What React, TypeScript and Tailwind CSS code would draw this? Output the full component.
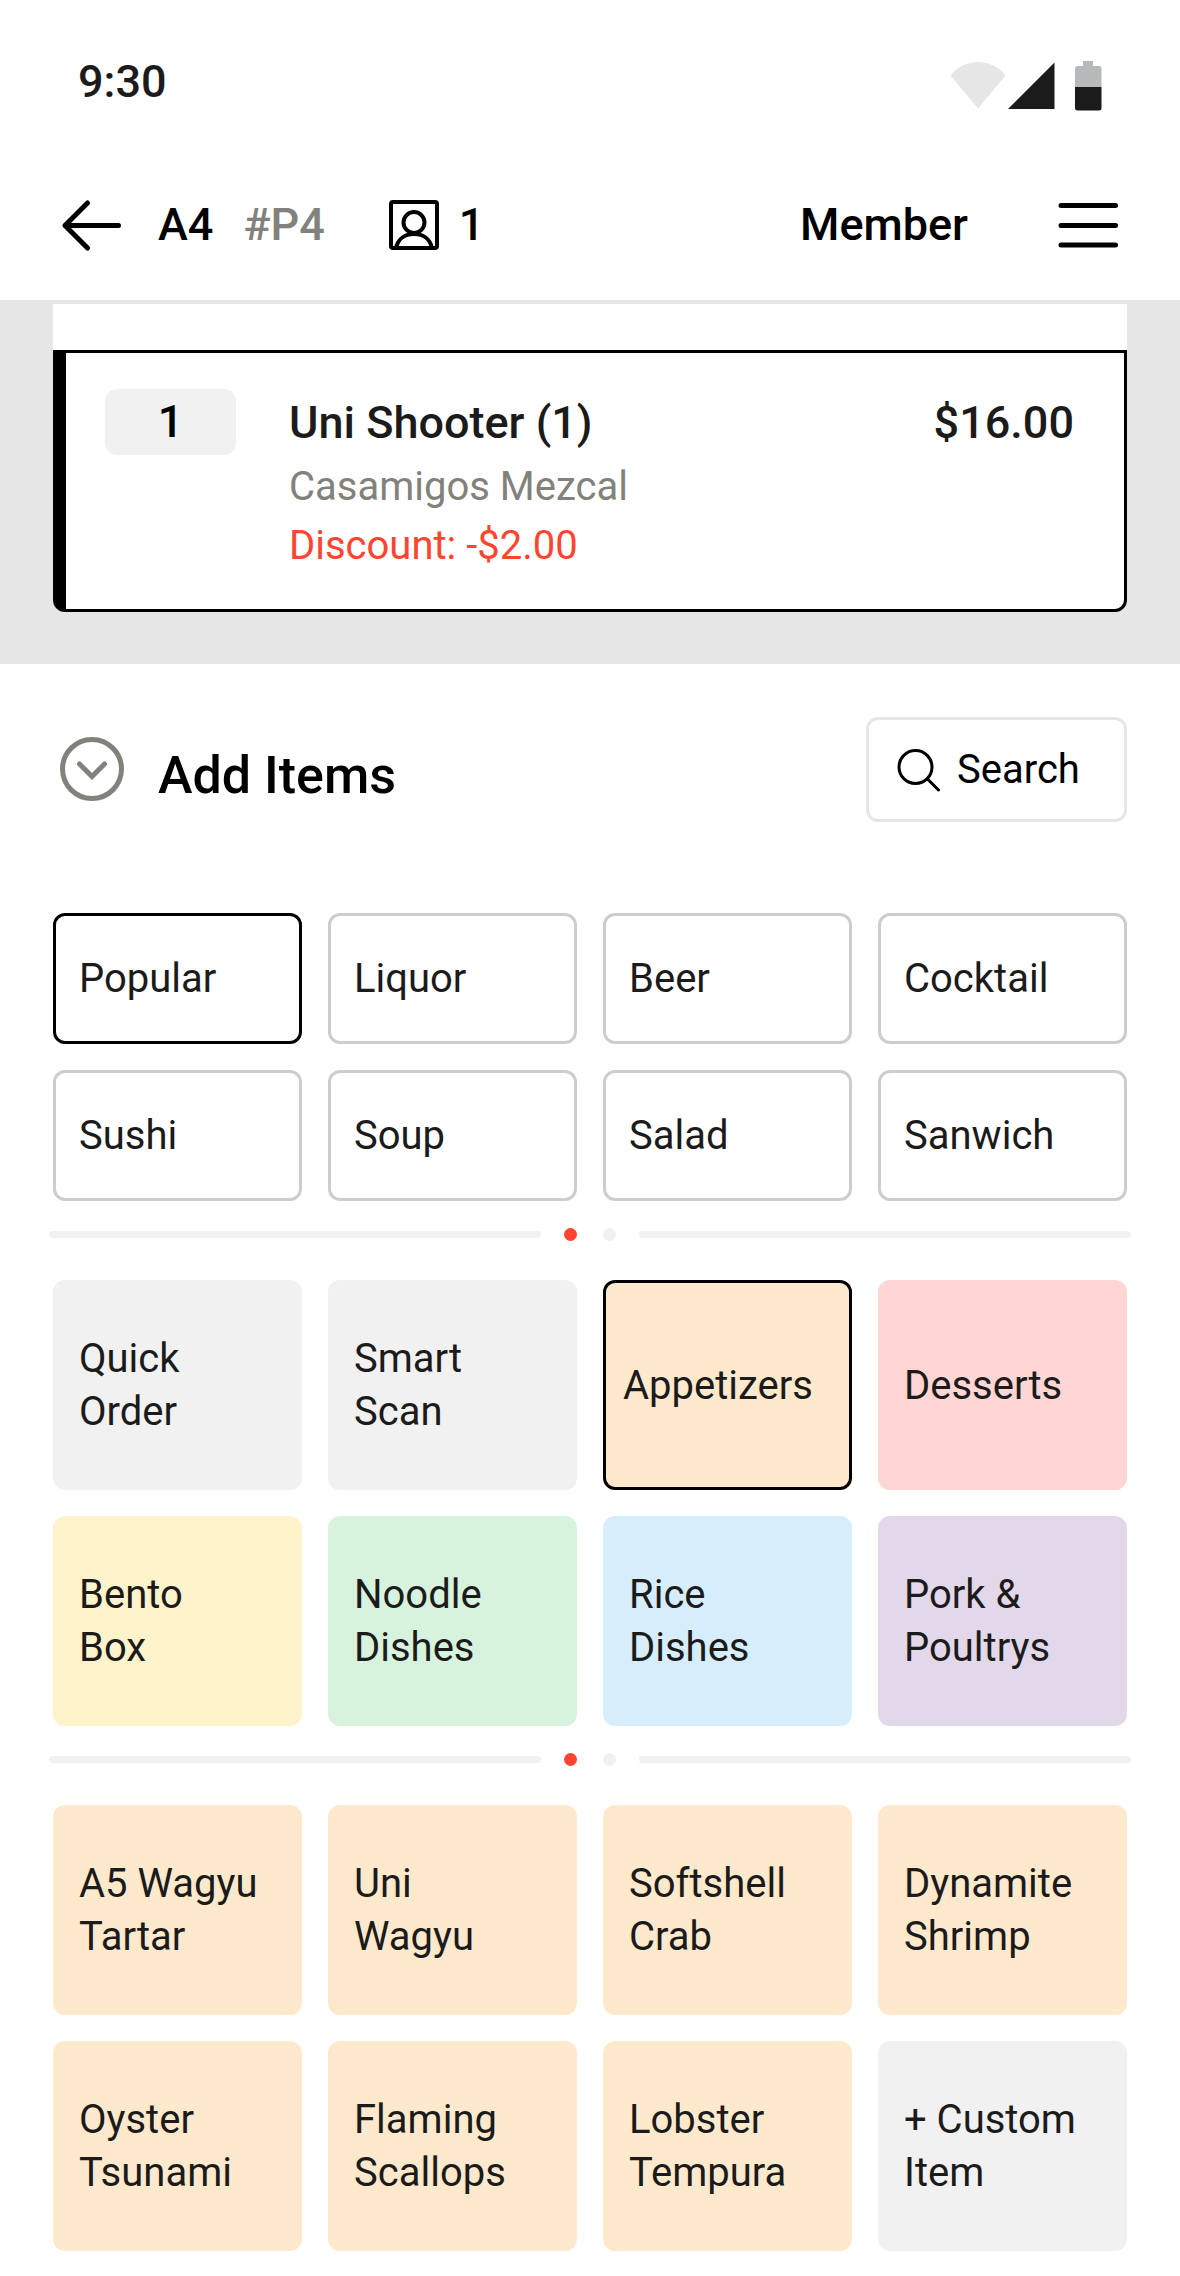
import React, { ReactNode, useState } from "react";

interface TileData {
	label: string;
	color: string;
}

const categories = [
	"Popular",
	"Liquor",
	"Beer",
	"Cocktail",
	"Sushi",
	"Soup",
	"Salad",
	"Sanwich",
];

const groups: TileData[] = [
	{ label: "Quick\nOrder", color: "bg-[#f1f1f1]" },
	{ label: "Smart\nScan", color: "bg-[#f1f1f1]" },
	{ label: "Appetizers", color: "bg-[#ffe9cc]" },
	{ label: "Desserts", color: "bg-[#ffd6d3]" },
	{ label: "Bento\nBox", color: "bg-[#fff3cc]" },
	{ label: "Noodle\nDishes", color: "bg-[#d7f3de]" },
	{ label: "Rice\nDishes", color: "bg-[#d6eefb]" },
	{ label: "Pork &\nPoultrys", color: "bg-[#e3d8e9]" },
];

const items: TileData[] = [
	{ label: "A5 Wagyu\nTartar", color: "bg-[#ffe9cc]" },
	{ label: "Uni\nWagyu", color: "bg-[#ffe9cc]" },
	{ label: "Softshell\nCrab", color: "bg-[#ffe9cc]" },
	{ label: "Dynamite\nShrimp", color: "bg-[#ffe9cc]" },
	{ label: "Oyster\nTsunami", color: "bg-[#ffe9cc]" },
	{ label: "Flaming\nScallops", color: "bg-[#ffe9cc]" },
	{ label: "Lobster\nTempura", color: "bg-[#ffe9cc]" },
	{ label: "+ Custom\nItem", color: "bg-[#f1f1f1]" },
];

// Icons
const StatusIcons = () => (
	<svg className="w-[154px] h-14" viewBox="0 0 154 56" aria-hidden="true">
		<path d="M30 52.5L2.5 19.5A34.8 34.8 0 0 1 57.5 19.5Z" fill="#e6e6e6" />
		<path d="M60 53L106.5 6.5V53Z" fill="#1c1b1b" />
		<path
			d="M135 5h10v5h6a2.5 2.5 0 0 1 2.5 2.5V31H127V12.5a2.5 2.5 0 0 1 2.5-2.5h5.5z"
			fill="#b8b9ba"
		/>
		<path
			d="M127 31h26.5v21a2.5 2.5 0 0 1-2.5 2.5h-21.5a2.5 2.5 0 0 1-2.5-2.5z"
			fill="#1c1b1b"
		/>
	</svg>
);

const BackIcon = () => (
	<svg
		className="w-[79px] h-[79px]"
		viewBox="0 0 79 79"
		fill="none"
		stroke="currentColor"
		strokeWidth="5"
		strokeLinecap="round"
		strokeLinejoin="round">
		<path d="M65.5 39.5H12M34.5 17L12 39.5L34.5 62" />
	</svg>
);

const MenuIcon = () => (
	<svg
		className="w-[79px] h-[79px]"
		viewBox="0 0 79 79"
		fill="none"
		stroke="currentColor"
		strokeWidth="5"
		strokeLinecap="round">
		<path d="M13 19.5H67.5M13 39.5H67.5M13 59H67.5" />
	</svg>
);

const GuestIcon = () => (
	<svg
		className="w-[50px] h-[50px]"
		viewBox="0 0 50 50"
		fill="none"
		stroke="currentColor"
		strokeWidth="4">
		<rect x="2" y="2" width="46" height="46" rx="2" />
		<circle cx="25" cy="22.5" r="10.5" />
		<path d="M7 48C9 39 16 34 25 34S41 39 43 48" />
	</svg>
);

const CollapseIcon = () => (
	<svg
		className="w-[79px] h-[79px]"
		viewBox="0 0 79 79"
		fill="none"
		stroke="currentColor"
		strokeWidth="5"
		strokeLinecap="round">
		<circle cx="39" cy="39" r="29.5" />
		<path d="M26.5 34L39 46.5L51.5 34" />
	</svg>
);

const SearchIcon = () => (
	<svg
		className="w-[44px] h-[44px]"
		viewBox="0 0 44 44"
		fill="none"
		stroke="currentColor"
		strokeWidth="3"
		strokeLinecap="round">
		<circle cx="18.5" cy="19" r="16.5" />
		<path d="M30.5 31L41.5 42" />
	</svg>
);

// Page indicator between two grids
const Pager = () => (
	<div className="flex items-center mt-[27px] mb-[39px] -mx-1">
		<div className="flex-1 h-[7px] rounded-full bg-[#f1f1f1]"></div>
		<div className="flex gap-[26px] mx-[23px]">
			<span className="w-[13px] h-[13px] rounded-full bg-[#ff4530]"></span>
			<span className="w-[13px] h-[13px] rounded-full bg-[#f1f1f1]"></span>
		</div>
		<div className="flex-1 h-[7px] rounded-full bg-[#f1f1f1]"></div>
	</div>
);

const TileGrid: React.FC<{ children: ReactNode }> = ({ children }) => {
	return <div className="grid grid-cols-4 gap-[26px]">{children}</div>;
};

interface TileProps {
	tile: TileData;
	selected?: boolean;
	onClick?: () => void;
}

const Tile: React.FC<TileProps> = ({ tile, selected = false, onClick }) => {
	return (
		<button
			onClick={onClick}
			className={`h-[210px] rounded-xl text-left text-[40px] leading-[53px] whitespace-pre-line ${
				tile.color
			} ${selected ? "px-[17px] border-3 border-black" : "px-[26px]"}`}>
			{tile.label}
		</button>
	);
};

export default function App() {
	const [category, setCategory] = useState("Popular");
	const [group, setGroup] = useState("Appetizers");

	return (
		<div className="min-h-screen bg-white text-[#1c1b1b] font-[Roboto,sans-serif]">
			{/* Status bar */}
			<div className="flex items-start justify-between h-[150px] pt-14 px-[78px]">
				<span className="text-[45px] leading-[52px] font-medium">9:30</span>
				<StatusIcons />
			</div>

			<header className="flex items-center justify-between h-[154px] px-[53px] text-[45px] leading-[52px] font-medium text-black border-b-4 border-[#e6e6e6]">
				<div className="flex items-center">
					<button aria-label="Back" className="mr-[26px]">
						<BackIcon />
					</button>
					<span>A4</span>
					<span className="ml-[30px] text-[#82817c]">#P4</span>
					<span className="flex items-center gap-5 ml-16">
						<GuestIcon />1
					</span>
				</div>
				<div className="flex items-center gap-20">
					<button>Member</button>
					<button aria-label="Menu">
						<MenuIcon />
					</button>
				</div>
			</header>

			{/* Order lines */}
			<section className="px-[53px] pb-[52px] bg-[#e6e6e6]">
				<div className="h-[46px] bg-white"></div>
				<div className="flex items-start pt-9 pb-[34px] pl-[39px] pr-[50px] bg-white border-3 border-l-13 border-black rounded-b-xl">
					<span className="w-[131px] rounded-xl bg-[#f1f1f1] text-[45px] leading-[66px] font-medium text-center text-black">
						1
					</span>
					<div className="flex-1 ml-[53px]">
						<div className="flex justify-between text-[45px] leading-[68px] font-medium">
							<span>Uni Shooter (1)</span>
							<span>$16.00</span>
						</div>
						<div className="text-[40px] leading-[59px]">
							<p className="text-[#82817c]">Casamigos Mezcal</p>
							<p className="text-[#ff4530]">Discount: -$2.00</p>
						</div>
					</div>
				</div>
			</section>

			<main className="px-[53px] pt-[53px] pb-[25px]">
				<div className="flex items-center justify-between h-[105px] mb-[91px] text-black">
					<div className="flex items-center">
						<button aria-label="Collapse" className="mr-[26px] text-[#82817c]">
							<CollapseIcon />
						</button>
						<h2 className="pt-3 text-[52px] leading-[60px] font-medium">
							Add Items
						</h2>
					</div>
					<button className="flex items-center min-w-[261px] h-full gap-4 px-7 text-[40px] border-3 border-[#e6e6e6] rounded-xl">
						<SearchIcon />
						Search
					</button>
				</div>

				<TileGrid>
					{categories.map((name) => (
						<button
							key={name}
							onClick={() => setCategory(name)}
							className={`h-[131px] px-[23px] text-left text-[40px] border-3 rounded-xl ${
								category === name ? "border-black" : "border-[#cdcdcd]"
							}`}>
							{name}
						</button>
					))}
				</TileGrid>

				<Pager />

				<TileGrid>
					{groups.map((tile) => (
						<Tile
							key={tile.label}
							tile={tile}
							selected={group === tile.label}
							onClick={() => setGroup(tile.label)}
						/>
					))}
				</TileGrid>

				<Pager />

				<TileGrid>
					{items.map((tile) => (
						<Tile key={tile.label} tile={tile} />
					))}
				</TileGrid>
			</main>
		</div>
	);
}
